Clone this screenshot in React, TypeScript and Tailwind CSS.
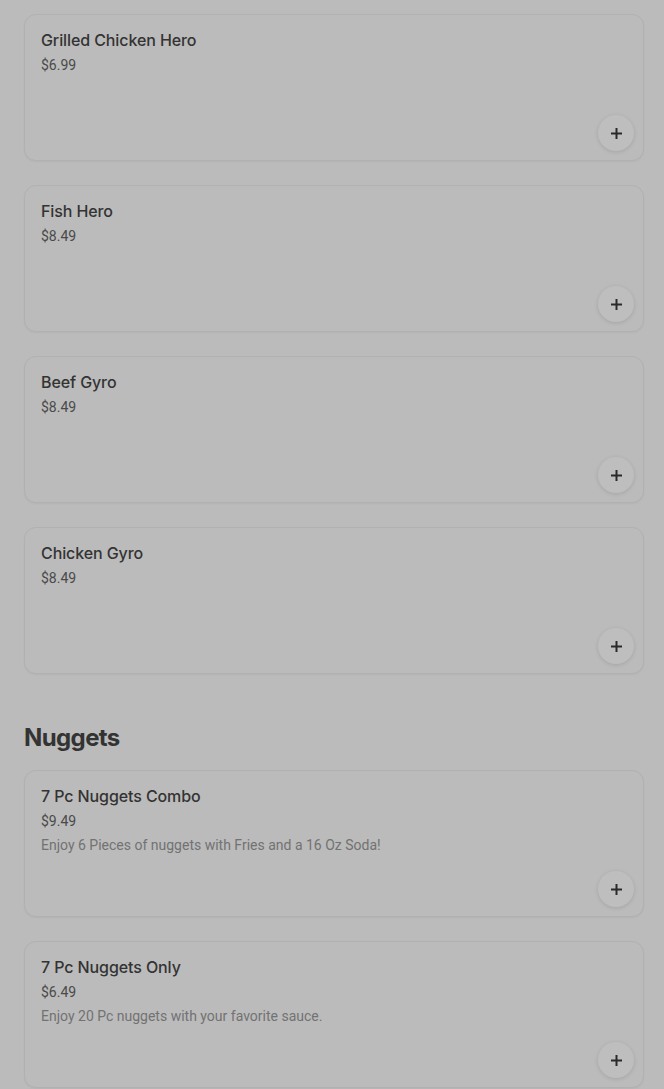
import React from "react";

type Item = { name: string; price: string; desc?: string };

const heroes: Item[] = [
  { name: "Grilled Chicken Hero", price: "$6.99" },
  { name: "Fish Hero", price: "$8.49" },
  { name: "Beef Gyro", price: "$8.49" },
  { name: "Chicken Gyro", price: "$8.49" },
];

const nuggets: Item[] = [
  { name: "7 Pc Nuggets Combo", price: "$9.49", desc: "Enjoy 6 Pieces of nuggets with Fries and a 16 Oz Soda!" },
  { name: "7 Pc Nuggets Only", price: "$6.49", desc: "Enjoy 20 Pc nuggets with your favorite sauce." },
];

function Card({ item }: { item: Item }) {
  return (
    <div className="flex min-h-[147px] flex-col rounded-[12px] border border-[#b1b1b1] bg-[#bbbbbb] pl-[16px] pr-[9px] pt-[15px] pb-[9px] shadow-[0_1px_2px_rgba(0,0,0,0.04)]">
      <div className="text-[16px] leading-[20px] font-medium tracking-[-0.1px] text-[#333333]">{item.name}</div>
      <div
        className="mt-[5px] text-[14px] leading-[20px] text-[#4a4a4a]"
        style={{ fontFamily: "Roboto, 'Noto Sans', sans-serif" }}
      >
        {item.price}
      </div>
      {item.desc && (
        <div
          className="mt-[4px] text-[14px] leading-[20px] text-[#727272]"
          style={{ fontFamily: "Roboto, 'Noto Sans', sans-serif" }}
        >
          {item.desc}
        </div>
      )}
      <div className="mt-auto flex justify-end">
        <button className="flex h-[36px] w-[36px] items-center justify-center rounded-full bg-[#bebebe] shadow-[0_1px_4px_rgba(0,0,0,0.12)]">
          <svg width="13" height="13" viewBox="0 0 13 13" fill="none">
            <path d="M6.5 1v11M1 6.5h11" stroke="#2a2a2a" strokeWidth="2" />
          </svg>
        </button>
      </div>
    </div>
  );
}

export default function App() {
  return (
    <div
      className="min-h-[1089px] w-full bg-[#bbbbbb] pl-[24px] pr-[20px] pt-[14px]"
      style={{ fontFamily: "Inter, 'Noto Sans', sans-serif" }}
    >
      <div className="flex flex-col gap-[24px]">
        {heroes.map((it) => (
          <Card key={it.name} item={it} />
        ))}
      </div>
      <h2 className="mt-[48px] mb-[16px] text-[24px] leading-[32px] font-bold tracking-[-0.6px] text-[#333333]">
        Nuggets
      </h2>
      <div className="flex flex-col gap-[24px]">
        {nuggets.map((it) => (
          <Card key={it.name} item={it} />
        ))}
      </div>
    </div>
  );
}
